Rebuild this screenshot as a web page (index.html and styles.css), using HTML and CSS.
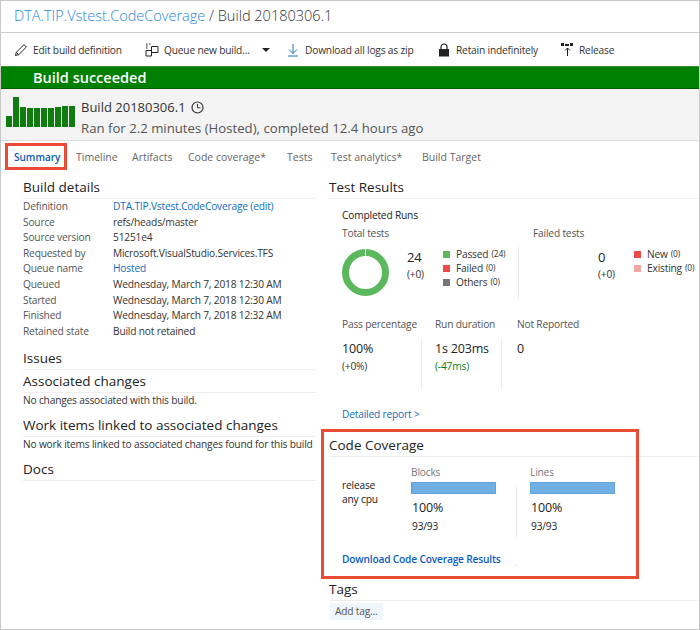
FILE: index.html
```html
<!DOCTYPE html>
<html lang="en">
<head>
  <meta charset="UTF-8" />
  <title>Build 20180306.1</title>
  <link rel="stylesheet" href="styles.css">
</head>
<body>
<div class="frame">

  <div class="titulo"><a href="#">DTA.TIP.Vstest.CodeCoverage</a> / Build 20180306.1</div>

  <div class="toolbar">
    <span class="tool tool-edit">
      <svg width="14" height="14" viewBox="0 0 14 14"><path d="M1.500 12.500l.8-3.200L10 1.600l2.400 2.400-7.700 7.700zM2.300 9.300l2.400 2.400" fill="none" stroke="#222" stroke-width="1"/></svg>
      Edit build definition
    </span>
    <span class="tool tool-queue">
      <svg width="14" height="14" viewBox="0 0 14 14"><path d="M6.500 3.500h6.500v6H6.500zM1 7.500h5.500v5.500H1z" fill="none" stroke="#222"/><path d="M1 1h1.500M4 1h1.500M1 3h1.500M1 5h1.500" stroke="#222"/></svg>
      Queue new build...
      <span class="caret"></span>
    </span>
    <span class="tool tool-download">
      <svg width="14" height="14" viewBox="0 0 14 14"><path d="M7 1v9.500M3 6.500l4 4 4-4M2 13h10" fill="none" stroke="#1a73c9"/></svg>
      Download all logs as zip
    </span>
    <span class="tool tool-retain">
      <svg width="12" height="14" viewBox="0 0 12 14"><path d="M2 6.500V4a3 3 0 0 1 6 0v2.500" fill="none" stroke="#222" stroke-width="1.200"/><rect x="0" y="6" width="10" height="7.500" fill="#222"/></svg>
      Retain indefinitely
    </span>
    <span class="tool">
      <svg width="14" height="14" viewBox="0 0 14 14"><path d="M1 0h3v3H1zM5 1h4v2H5zM10 0h3v3h-3z" fill="#222"/><path d="M7.500 13V5M5 7.500L7.500 5 10 7.500" fill="none" stroke="#222"/></svg>
      Release
    </span>
  </div>

  <div class="banner">Build succeeded</div>

  <div class="resumo">
    <div class="barras">
      <i class="b11"></i><i class="b30"></i><i class="b20"></i><i class="b19"></i><i class="b19"></i><i class="b19"></i><i class="b19"></i><i class="b20"></i><i class="b21"></i><i class="b21"></i>
    </div>
    <div>
      <div class="resumo-nome">Build 20180306.1
        <svg width="13" height="13" viewBox="0 0 13 13"><circle cx="6.500" cy="6.500" r="5.500" fill="none" stroke="#333" stroke-width="1.200"/><path d="M6.500 3v3.800h3" fill="none" stroke="#333"/></svg>
      </div>
      <div class="resumo-info">Ran for 2.2 minutes (Hosted), completed 12.4 hours ago</div>
    </div>
  </div>

  <div class="abas">
    <span class="aba ativa">Summary</span>
    <span class="aba">Timeline</span>
    <span class="aba">Artifacts</span>
    <span class="aba">Code coverage*</span>
    <span class="aba">Tests</span>
    <span class="aba">Test analytics*</span>
    <span class="aba">Build Target</span>
  </div>

  <div class="colunas">
    <div class="esquerda">
      <h2>Build details</h2>
      <div class="detalhes">
        <span class="rotulo">Definition</span><span><a href="#">DTA.TIP.Vstest.CodeCoverage (edit)</a></span>
        <span class="rotulo">Source</span><span>refs/heads/master</span>
        <span class="rotulo">Source version</span><span>51251e4</span>
        <span class="rotulo">Requested by</span><span>Microsoft.VisualStudio.Services.TFS</span>
        <span class="rotulo">Queue name</span><span><a href="#">Hosted</a></span>
        <span class="rotulo">Queued</span><span>Wednesday, March 7, 2018 12:30 AM</span>
        <span class="rotulo">Started</span><span>Wednesday, March 7, 2018 12:30 AM</span>
        <span class="rotulo">Finished</span><span>Wednesday, March 7, 2018 12:32 AM</span>
        <span class="rotulo">Retained state</span><span>Build not retained</span>
      </div>
      <h2 class="issues">Issues</h2>
      <h2>Associated changes</h2>
      <p class="vazio">No changes associated with this build.</p>
      <h2 class="work">Work items linked to associated changes</h2>
      <p class="vazio">No work items linked to associated changes found for this build</p>
      <h2 class="docs">Docs</h2>
    </div>

    <div class="direita">
      <h2>Test Results</h2>
      <div class="testes">
        <div class="runs">Completed Runs</div>
        <div class="total-falhas">
          <div class="total">
            <div class="rotulo">Total tests</div>
            <div class="total-corpo">
              <svg class="donut" width="47" height="47" viewBox="0 0 47 47"><circle cx="23.500" cy="23.500" r="20" fill="none" stroke="#5cb85c" stroke-width="7"/><path d="M23.500 0v7" stroke="#fff"/></svg>
              <div class="numero"><b>24</b><span>(+0)</span></div>
              <div class="legenda">
                <div><i class="verde"></i>Passed <small>(24)</small></div>
                <div><i class="vermelho"></i>Failed <small>(0)</small></div>
                <div><i class="cinza"></i>Others <small>(0)</small></div>
              </div>
            </div>
          </div>
          <div class="falhas">
            <div class="rotulo">Failed tests</div>
            <div class="falhas-corpo">
              <div class="numero"><b>0</b><span>(+0)</span></div>
              <div class="legenda">
                <div><i class="vermelho"></i>New <small>(0)</small></div>
                <div><i class="rosa"></i>Existing <small>(0)</small></div>
              </div>
            </div>
          </div>
        </div>
        <div class="metricas">
          <div class="metrica m1">
            <div class="rotulo">Pass percentage</div>
            <div class="metrica-corpo"><b>100%</b><span>(+0%)</span></div>
          </div>
          <div class="metrica m2">
            <div class="rotulo">Run duration</div>
            <div class="metrica-corpo"><b>1s 203ms</b><span class="melhor">(-47ms)</span></div>
          </div>
          <div class="metrica m3">
            <div class="rotulo">Not Reported</div>
            <div class="metrica-corpo"><b>0</b></div>
          </div>
        </div>
        <a class="relatorio" href="#">Detailed report &gt;</a>
      </div>

      <h2 class="cobertura">Code Coverage</h2>
      <div class="cc">
        <div class="cc-nome">release<br>any cpu</div>
        <div class="cc-col">
          <div class="cc-titulo">Blocks</div>
          <div class="cc-barra"></div>
          <div class="cc-pct">100%</div>
          <div class="cc-qtd">93/93</div>
        </div>
        <div class="cc-divisor"></div>
        <div class="cc-col cc-linhas">
          <div class="cc-titulo">Lines</div>
          <div class="cc-barra"></div>
          <div class="cc-pct">100%</div>
          <div class="cc-qtd">93/93</div>
        </div>
      </div>
      <div class="baixar-linha">
        <a class="baixar" href="#">Download Code Coverage Results</a>
        <span class="toco"></span>
      </div>

      <h2 class="tags">Tags</h2>
      <span class="add-tag">Add tag...</span>
    </div>
  </div>

  <div class="marca marca-aba"></div>
  <div class="marca marca-cc"></div>
</div>
</body>
</html>
```

FILE: styles.css
```css
* {
  box-sizing: border-box;
}
html, body {
  margin: 0;
  padding: 0;
}
body {
  width: 700px;
  height: 630px;
  overflow: hidden;
  background: #fff;
  font-family: "Open Sans", "Noto Sans", Arial, sans-serif;
  font-size: 10.200px;
  letter-spacing: -0.180px;
  color: #333;
}
a {
  color: #106ebe;
  text-decoration: none;
}
.frame {
  position: relative;
  width: 700px;
  height: 630px;
  border: 1px solid #c8c8c8;
  overflow: hidden;
}
.titulo {
  height: 32px;
  padding: 5px 0 0 13px;
  font-size: 14.500px;
  font-weight: 300;
  letter-spacing: 0;
  line-height: 20px;
  color: #333;
  border-bottom: 1px solid #ccc;
}
.titulo a {
  color: #2b88d8;
}
.toolbar {
  display: flex;
  align-items: center;
  height: 33px;
  padding-left: 13px;
  color: #333;
}
.tool {
  display: flex;
  align-items: center;
  gap: 5px;
  white-space: nowrap;
}
.tool-edit { width: 131px; }
.tool-queue { width: 141px; }
.tool-download { width: 153px; }
.tool-retain { width: 121px; }
.caret {
  width: 0;
  height: 0;
  margin-left: 7px;
  border: 4px solid transparent;
  border-top-color: #222;
  border-bottom-width: 0;
}
.banner {
  height: 23px;
  padding-left: 32px;
  background: #008000;
  border-top: 1px solid #3c8c3c;
  border-bottom: 1px solid #005c00;
  color: #fff;
  font-size: 14.500px;
  font-weight: 600;
  letter-spacing: 0;
  line-height: 21px;
}
.resumo {
  display: flex;
  height: 52px;
  background: #f3f3f3;
  border-bottom: 1px solid #ddd;
  padding-left: 5px;
}
.barras {
  display: flex;
  align-items: flex-end;
  gap: 1px;
  width: 75px;
  height: 38px;
}
.barras i {
  width: 6px;
  background: #107c10;
}
.b11 { height: 11px; }
.b19 { height: 19px; }
.b20 { height: 20px; }
.b21 { height: 21px; }
.b30 { height: 30px; }
.resumo-nome {
  display: flex;
  align-items: center;
  gap: 5px;
  margin-top: 8px;
  font-size: 13px;
  letter-spacing: 0;
  line-height: 21px;
  color: #333;
}
.resumo-info {
  font-size: 13.200px;
  letter-spacing: 0;
  line-height: 21px;
  color: #555;
}
.abas {
  display: grid;
  grid-template-columns: 62px 56px 56px 99px 44px 91px auto;
  height: 33px;
  align-items: center;
  padding: 0 0 2px 13px;
  font-size: 10.500px;
  letter-spacing: 0;
  color: #666;
}
.aba.ativa {
  color: #0b5cad;
  font-size: 10px;
  font-weight: 600;
}
.colunas {
  display: flex;
  padding: 2px 0 0 22px;
}
.esquerda {
  width: 306px;
  flex: none;
  padding-right: 13px;
}
.direita {
  flex: 1;
}
h2 {
  margin: 0;
  height: 23px;
  font-size: 13.500px;
  font-weight: 400;
  letter-spacing: 0;
  line-height: 23px;
  color: #222;
  border-bottom: 1px solid #eee;
  white-space: nowrap;
}
.detalhes {
  display: grid;
  grid-template-columns: 90px 1fr;
  grid-auto-rows: 15.600px;
  line-height: 15.600px;
  white-space: nowrap;
}
.rotulo {
  color: #555;
}
.issues {
  margin-top: 8px;
}
.vazio {
  margin: 0;
  line-height: 15px;
  white-space: nowrap;
}
.work {
  margin-top: 6px;
}
.docs {
  margin-top: 6px;
}
.testes {
  padding: 8px 0 0 13px;
  color: #333;
}
.runs {
  line-height: 16px;
  color: #222;
}
.total-falhas {
  display: flex;
  margin-top: 2px;
}
.total {
  width: 191px;
  flex: none;
}
.total .rotulo, .falhas .rotulo {
  line-height: 16px;
}
.total-corpo {
  display: flex;
  align-items: flex-start;
  width: 177px;
  height: 52px;
  margin-top: 6px;
  border-right: 1px solid #e8e8e8;
}
.donut {
  margin-top: 2px;
  flex: none;
}
.numero {
  display: flex;
  flex-direction: column;
  width: 36px;
  margin-left: 18px;
}
.numero b {
  font-size: 13px;
  font-weight: 400;
  line-height: 20px;
  color: #222;
}
.numero span {
  line-height: 15px;
}
.legenda {
  line-height: 14px;
}
.legenda div {
  display: flex;
  align-items: center;
  gap: 6px;
  white-space: nowrap;
}
.legenda i {
  width: 7px;
  height: 7px;
}
.legenda small {
  font-size: 8.500px;
  margin-left: -3px;
}
.verde { background: #5cb85c; }
.vermelho { background: #ef4b4b; }
.cinza { background: #777; }
.rosa { background: #f4a6a6; }
.falhas-corpo {
  display: flex;
  margin-top: 6px;
  padding-left: 47px;
}
.metricas {
  display: flex;
  margin-top: 17px;
}
.metrica .rotulo {
  line-height: 16px;
}
.metrica-corpo {
  display: flex;
  flex-direction: column;
  height: 52px;
  margin-top: 6px;
  border-right: 1px solid #eee;
}
.metrica-corpo b {
  font-size: 12.500px;
  font-weight: 400;
  line-height: 21px;
  color: #222;
}
.metrica-corpo span {
  line-height: 15px;
}
.m1 { width: 93px; }
.m1 .metrica-corpo { width: 80px; }
.m2 { width: 82px; }
.m2 .metrica-corpo { width: 67px; }
.m3 .metrica-corpo { border-right: 0; }
.melhor {
  color: #107c10;
}
.relatorio {
  display: block;
  margin-top: 16px;
  line-height: 16px;
}
.cobertura {
  margin-top: 12px;
}
.cc {
  display: flex;
  padding: 8px 0 0 13px;
  color: #222;
}
.cc-nome {
  width: 69px;
  margin-top: 13px;
  line-height: 14px;
}
.cc-col {
  width: 105px;
}
.cc-divisor {
  width: 1px;
  height: 50px;
  margin-top: 22px;
  background: #e8e8e8;
}
.cc-linhas {
  width: 100px;
  margin-left: 13px;
}
.cc-titulo {
  line-height: 15px;
  color: #777;
}
.cc-barra {
  width: 85px;
  height: 12px;
  margin-top: 2px;
  background: #71aee4;
  border: 1px solid #5fa3df;
}
.cc-pct {
  margin: 6px 0 0 1px;
  font-size: 12.500px;
  line-height: 16px;
}
.cc-qtd {
  margin: 3px 0 0 1px;
  line-height: 14px;
}
.baixar-linha {
  display: flex;
  margin-top: 14px;
  padding-left: 13px;
}
.baixar {
  width: 174px;
  flex: none;
  line-height: 16px;
  font-weight: 600;
  color: #0b5cc4;
}
.toco {
  width: 1px;
  height: 3px;
  margin-top: 13px;
  background: #e8e8e8;
}
.tags {
  margin-top: 11px;
}
.add-tag {
  display: inline-block;
  margin: 2px 0 0 1px;
  padding: 0 5px;
  height: 17px;
  line-height: 17px;
  background: #eff6fc;
  color: #555;
}
.marca {
  position: absolute;
  border: 3px solid #ea4b35;
}
.marca-aba {
  left: 4px;
  top: 142px;
  width: 62px;
  height: 27px;
}
.marca-cc {
  left: 320px;
  top: 428px;
  width: 318px;
  height: 150px;
}
```
